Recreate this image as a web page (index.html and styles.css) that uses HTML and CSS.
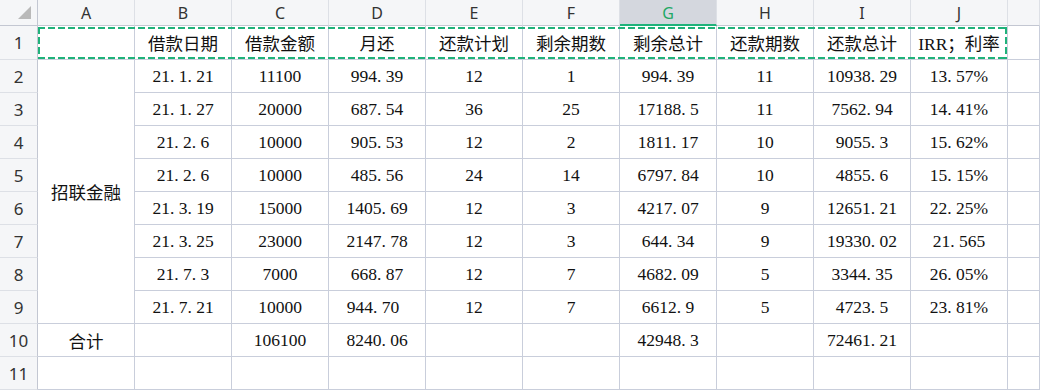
FILE: index.html
```html
<!DOCTYPE html>
<html lang="zh">
<head>
<meta charset="utf-8">
<link rel="stylesheet" href="styles.css">
</head>
<body>
<div class="sheet">
  <div class="grid">
    <div class="corner"><span class="tri"></span></div>
    <div class="ch">A</div><div class="ch">B</div><div class="ch">C</div><div class="ch">D</div><div class="ch">E</div><div class="ch">F</div><div class="ch sel">G</div><div class="ch">H</div><div class="ch">I</div><div class="ch">J</div><div class="ch"></div>

    <div class="rh">1</div><div class="c"></div><div class="c">借款日期</div><div class="c">借款金额</div><div class="c">月还</div><div class="c">还款计划</div><div class="c">剩余期数</div><div class="c">剩余总计</div><div class="c">还款期数</div><div class="c">还款总计</div><div class="c">IRR；利率</div><div class="c"></div>

    <div class="rh">2</div><div class="c merged">招联金融</div><div class="c">21. 1. 21</div><div class="c">11100</div><div class="c">994. 39</div><div class="c">12</div><div class="c">1</div><div class="c">994. 39</div><div class="c">11</div><div class="c">10938. 29</div><div class="c">13. 57%</div><div class="c"></div>

    <div class="rh">3</div><div class="c">21. 1. 27</div><div class="c">20000</div><div class="c">687. 54</div><div class="c">36</div><div class="c">25</div><div class="c">17188. 5</div><div class="c">11</div><div class="c">7562. 94</div><div class="c">14. 41%</div><div class="c"></div>

    <div class="rh">4</div><div class="c">21. 2. 6</div><div class="c">10000</div><div class="c">905. 53</div><div class="c">12</div><div class="c">2</div><div class="c">1811. 17</div><div class="c">10</div><div class="c">9055. 3</div><div class="c">15. 62%</div><div class="c"></div>

    <div class="rh">5</div><div class="c">21. 2. 6</div><div class="c">10000</div><div class="c">485. 56</div><div class="c">24</div><div class="c">14</div><div class="c">6797. 84</div><div class="c">10</div><div class="c">4855. 6</div><div class="c">15. 15%</div><div class="c"></div>

    <div class="rh">6</div><div class="c">21. 3. 19</div><div class="c">15000</div><div class="c">1405. 69</div><div class="c">12</div><div class="c">3</div><div class="c">4217. 07</div><div class="c">9</div><div class="c">12651. 21</div><div class="c">22. 25%</div><div class="c"></div>

    <div class="rh">7</div><div class="c">21. 3. 25</div><div class="c">23000</div><div class="c">2147. 78</div><div class="c">12</div><div class="c">3</div><div class="c">644. 34</div><div class="c">9</div><div class="c">19330. 02</div><div class="c">21. 565</div><div class="c"></div>

    <div class="rh">8</div><div class="c">21. 7. 3</div><div class="c">7000</div><div class="c">668. 87</div><div class="c">12</div><div class="c">7</div><div class="c">4682. 09</div><div class="c">5</div><div class="c">3344. 35</div><div class="c">26. 05%</div><div class="c"></div>

    <div class="rh">9</div><div class="c">21. 7. 21</div><div class="c">10000</div><div class="c shift">944. 70</div><div class="c">12</div><div class="c">7</div><div class="c">6612. 9</div><div class="c">5</div><div class="c">4723. 5</div><div class="c">23. 81%</div><div class="c"></div>

    <div class="rh">10</div><div class="c">合计</div><div class="c"></div><div class="c">106100</div><div class="c">8240. 06</div><div class="c"></div><div class="c"></div><div class="c">42948. 3</div><div class="c"></div><div class="c">72461. 21</div><div class="c"></div><div class="c"></div>

    <div class="rh">11</div><div class="c"></div><div class="c"></div><div class="c"></div><div class="c"></div><div class="c"></div><div class="c"></div><div class="c"></div><div class="c"></div><div class="c"></div><div class="c"></div><div class="c"></div>
  </div>
  <div class="marquee"></div>
</div>
</body>
</html>
```

FILE: styles.css
```css
html, body {
  margin: 0;
  padding: 0;
  background: #ffffff;
  overflow: hidden;
}

.sheet {
  position: relative;
  width: 1040px;
  height: 390px;
  overflow: hidden;
}

.grid {
  display: grid;
  grid-template-columns: 38px repeat(10, 97px) 1fr;
  grid-template-rows: 26px 34px repeat(10, 33px);
}

.grid > div {
  box-sizing: border-box;
  display: flex;
  align-items: center;
  justify-content: center;
  white-space: nowrap;
}

.corner {
  position: relative;
  background: #f5f6f8;
  border-right: 1px solid #c3c7d2;
  border-bottom: 1px solid #c3c7d2;
}

.tri {
  position: absolute;
  right: 6px;
  bottom: 6px;
  width: 0;
  height: 0;
  border-left: 13px solid transparent;
  border-bottom: 13px solid #b9b9b9;
}

.ch {
  background: #f5f6f8;
  border-right: 1px solid #dde0e6;
  border-bottom: 1px solid #c3c7d2;
  font-family: "Noto Sans", "Liberation Sans", sans-serif;
  font-size: 16px;
  color: #333333;
  padding-top: 1px;
}

.ch.sel {
  background: #d4d7de;
  color: #1fa865;
  border-bottom: 2px solid #1fb27a;
}

.rh {
  background: #f5f6f8;
  border-right: 1px solid #c3c7d2;
  border-bottom: 1px solid #dde0e6;
  font-family: "Noto Sans", "Liberation Sans", sans-serif;
  font-size: 17px;
  color: #333333;
}

.c {
  background: #ffffff;
  border-right: 1px solid #c9cedb;
  border-bottom: 1px solid #c9cedb;
  font-family: "Liberation Serif", "Noto Sans CJK SC", serif;
  font-size: 17.5px;
  color: #111111;
}

.c.merged {
  grid-row: span 8;
}

.c.shift {
  padding-right: 8px;
}

.marquee {
  position: absolute;
  left: 38px;
  top: 27px;
  width: 969px;
  height: 32px;
  pointer-events: none;
  background:
    repeating-linear-gradient(90deg, #1fb27a 0 7px, transparent 7px 10px) left top / 100% 2px no-repeat,
    repeating-linear-gradient(90deg, #1fb27a 0 7px, transparent 7px 10px) left bottom / 100% 2px no-repeat,
    repeating-linear-gradient(180deg, #1fb27a 0 7px, transparent 7px 10px) left top / 2px 100% no-repeat,
    repeating-linear-gradient(180deg, #1fb27a 0 7px, transparent 7px 10px) right top / 2px 100% no-repeat;
}
```
